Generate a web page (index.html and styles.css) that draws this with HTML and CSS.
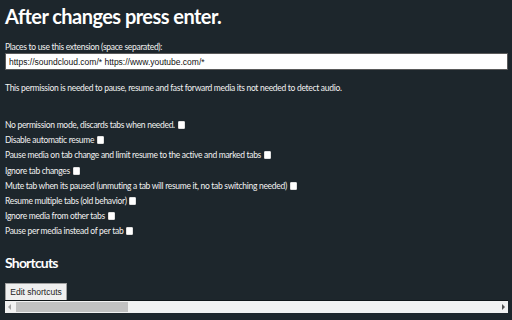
FILE: index.html
```html
<!DOCTYPE html>
<html lang="en">
<head>
<meta charset="utf-8">
<title>Options</title>
<link rel="stylesheet" href="styles.css">
</head>
<body>
<div class="page">
  <h1 class="title">After changes press enter.</h1>
  <label class="field-label" for="hosts">Places to use this extension (space separated):</label>
  <input class="hosts" id="hosts" type="text" value="https://soundcloud.com/* https://www.youtube.com/*">
  <p class="note">This permission is needed to pause, resume and fast forward media its not needed to detect audio.</p>
  <div class="options">
    <label class="opt">No permission mode, discards tabs when needed. <span class="box"></span></label>
    <label class="opt">Disable automatic resume <span class="box"></span></label>
    <label class="opt">Pause media on tab change and limit resume to the active and marked tabs <span class="box"></span></label>
    <label class="opt">Ignore tab changes <span class="box"></span></label>
    <label class="opt">Mute tab when its paused (unmuting a tab will resume it, no tab switching needed) <span class="box"></span></label>
    <label class="opt">Resume multiple tabs (old behavior) <span class="box"></span></label>
    <label class="opt">Ignore media from other tabs <span class="box"></span></label>
    <label class="opt">Pause per media instead of per tab <span class="box"></span></label>
  </div>
  <h2 class="subtitle">Shortcuts</h2>
  <button class="btn" type="button">Edit shortcuts</button>
  <div class="hscroll">
    <span class="arrow arrow-left"></span>
    <span class="thumb"></span>
    <span class="arrow arrow-right"></span>
  </div>
</div>
</body>
</html>
```
FILE: styles.css
```css
html, body {
  margin: 0;
  padding: 0;
  background: #1d262c;
}
.page {
  width: 503px;
  padding-left: 5px;
  display: flex;
  flex-direction: column;
  align-items: flex-start;
  color: #f2f2f2;
  font-family: Lato, "Liberation Sans", sans-serif;
  font-size: 8.5px;
  letter-spacing: -0.3px;
}
.title {
  margin: 4px 0 0;
  font-size: 20px;
  line-height: 24px;
  font-weight: 700;
  letter-spacing: -0.55px;
  color: #ffffff;
}
.field-label {
  margin-top: 14px;
  line-height: 11px;
}
.hosts {
  box-sizing: border-box;
  width: 503px;
  height: 17px;
  margin: 0;
  padding: 0 3px;
  border: 1px solid #5a5a5a;
  background: #ffffff;
  color: #111;
  font-family: "Liberation Sans", Arial, sans-serif;
  font-size: 8.5px;
  letter-spacing: 0;
  outline: none;
}
.note {
  margin: 12px 0 0;
  line-height: 12px;
}
.options {
  margin-top: 24px;
  display: flex;
  flex-direction: column;
}
.opt {
  height: 15.2px;
  line-height: 15.2px;
  display: flex;
  align-items: center;
  white-space: pre;
}
.box {
  width: 7px;
  height: 8px;
  box-sizing: border-box;
  background: #ffffff;
  border: 1px solid #e0e0e0;
  border-radius: 1px;
  margin-left: 1px;
  margin-top: -1px;
}
.subtitle {
  margin: 14px 0 0;
  font-size: 14px;
  line-height: 17px;
  font-weight: 700;
  letter-spacing: -0.8px;
  color: #ffffff;
}
.btn {
  margin: 12px 0 0;
  height: 17px;
  width: 62px;
  padding: 0;
  box-sizing: border-box;
  border: 1px solid #a0a0a0;
  border-bottom: none;
  background: #efefef;
  color: #222;
  font-family: "Liberation Sans", Arial, sans-serif;
  font-size: 8.5px;
  letter-spacing: 0;
  border-radius: 1px 1px 0 0;
}
.hscroll {
  width: 503px;
  height: 13px;
  box-sizing: border-box;
  background: #f1f1f1;
  border-top: 1px solid #0f1417;
  display: flex;
  align-items: center;
  padding: 0 3px 0 3px;
}
.arrow {
  width: 0;
  height: 0;
  border-top: 3px solid transparent;
  border-bottom: 3px solid transparent;
}
.arrow-left {
  border-right: 3px solid #a3a3a3;
  margin-right: 5px;
}
.thumb {
  width: 112px;
  height: 10px;
  background: #c1c1c1;
}
.arrow-right {
  border-left: 3px solid #505050;
  margin-left: auto;
}
```
